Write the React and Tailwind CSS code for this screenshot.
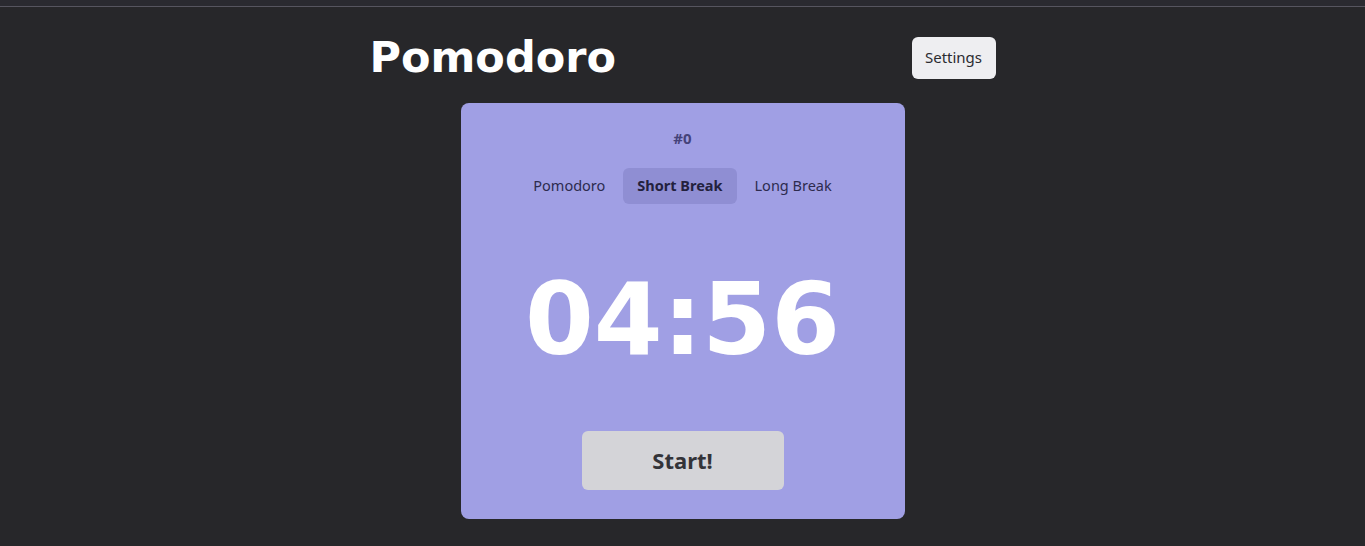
import { useState } from 'react'

const modes = ['Pomodoro', 'Short Break', 'Long Break']

export default function App() {
  const [mode, setMode] = useState('Short Break')

  return (
    <div className="min-h-[546px] bg-[#27272a] font-['Noto_Sans',sans-serif]">
      <div className="h-[6px] bg-[#2a2a30]" />
      <div className="h-px bg-[#56555f]" />

      <div className="mx-auto w-[626px] pt-[29px]">
        {/* Header */}
        <div className="flex items-center justify-between">
          <h1 className="font-['DejaVu_Sans',sans-serif] text-[43px] font-bold leading-none text-white">
            Pomodoro
          </h1>
          <button className="h-[42px] w-[84px] rounded-md bg-[#eeeef1] text-[15px] text-[#2b2b30]">
            Settings
          </button>
        </div>

        {/* Timer card */}
        <div className="mx-auto mt-[24px] flex h-[416px] w-[444px] flex-col items-center rounded-lg bg-[#a09fe4] pt-[26px]">
          <div className="text-[15px] font-bold leading-[18px] text-[#45437a]">#0</div>

          <div className="mt-[21px] flex gap-[4px]">
            {modes.map((m) => (
              <button
                key={m}
                onClick={() => setMode(m)}
                className={
                  m === mode
                    ? 'h-9 rounded-md bg-[#8f8ed3] px-[14px] text-[14.5px] font-bold text-[#23213d]'
                    : 'h-9 rounded-md px-[14px] text-[14.5px] text-[#2d2b4e]'
                }
              >
                {m}
              </button>
            ))}
          </div>

          <div className="mt-[60px] font-['DejaVu_Sans',sans-serif] text-[99px] font-bold leading-[112px] text-white">
            04:56
          </div>

          <button className="mt-[55px] h-[59px] w-[202px] rounded-md bg-[#d4d4d8] text-[22px] font-bold text-[#333338]">
            Start!
          </button>
        </div>
      </div>
    </div>
  )
}
